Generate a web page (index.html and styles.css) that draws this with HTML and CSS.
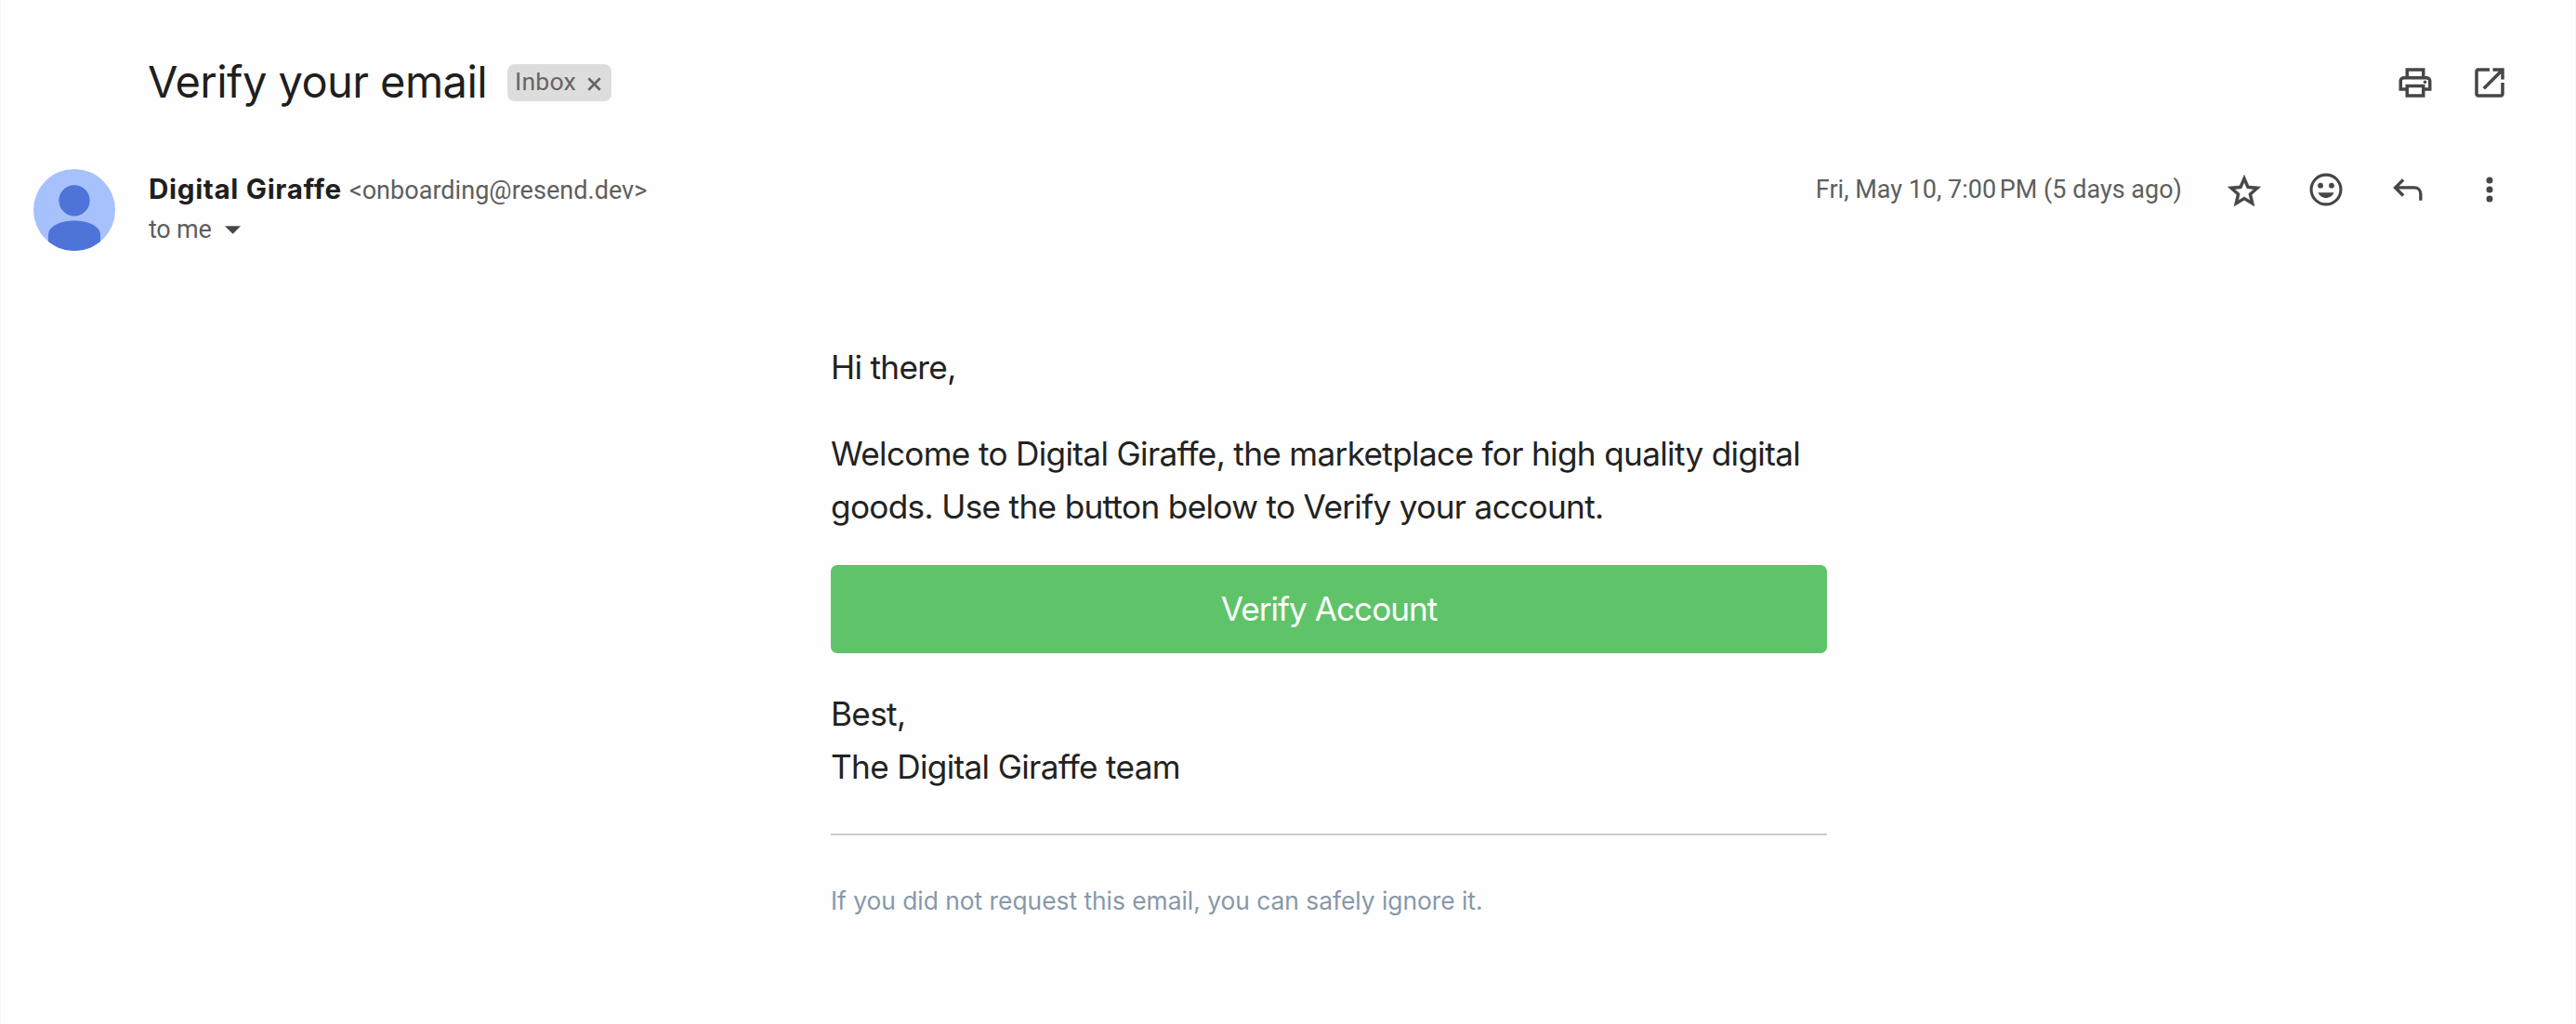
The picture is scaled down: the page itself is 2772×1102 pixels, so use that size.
FILE: index.html
```
<!DOCTYPE html>
<html lang="en">
<head>
<meta charset="utf-8">
<title>Verify your email</title>
<link rel="stylesheet" href="styles.css">
</head>
<body>
<main class="thread">
  <header class="subject-row">
    <h1 class="subject">Verify your email</h1>
    <span class="label">Inbox
      <svg class="label-close" viewBox="0 0 14 14"><path d="M1.2 1.2 12.8 12.8M12.8 1.2 1.2 12.8"/></svg>
    </span>
    <div class="thread-actions">
      <svg class="icon" viewBox="0 0 24 24"><path d="M19 8h-1V3H6v5H5c-1.66 0-3 1.34-3 3v6h4v4h12v-4h4v-6c0-1.66-1.34-3-3-3zM8 5h8v3H8V5zm8 12v2H8v-4h8v2zm2-2v-2H6v2H4v-4c0-.55.45-1 1-1h14c.55 0 1 .45 1 1v4h-2z"/><circle cx="18" cy="11.5" r="1"/></svg>
      <svg class="icon" viewBox="0 0 24 24"><path d="M19 19H5V5h7V3H5c-1.11 0-2 .9-2 2v14c0 1.1.89 2 2 2h14c1.1 0 2-.9 2-2v-7h-2v7zM14 3v2h3.59l-9.83 9.83 1.41 1.41L19 6.41V10h2V3h-7z"/></svg>
    </div>
  </header>

  <section class="message-head">
    <svg class="avatar" viewBox="0 0 88 88">
      <defs><clipPath id="disc"><circle cx="44" cy="44" r="44"/></clipPath></defs>
      <g clip-path="url(#disc)">
        <rect width="88" height="88" fill="#a6c1fb"/>
        <circle cx="44" cy="33.8" r="16.6" fill="#4e73d9"/>
        <path d="M16 88V71C16 61 30 55.6 44 55.6S72 61 72 71V88Z" fill="#4e73d9"/>
      </g>
    </svg>
    <div class="sender">
      <div class="sender-line"><span class="name">Digital Giraffe</span><span class="address">&lt;onboarding@resend.dev&gt;</span></div>
      <div class="recipient">to me <svg class="caret" viewBox="0 0 18 9"><path d="M0 0h18L9 9z"/></svg></div>
    </div>
    <div class="message-meta">
      <span class="date">Fri, May 10, 7:00<span class="thin"> </span>PM (5 days ago)</span>
      <svg class="icon star" viewBox="0 0 24 24"><path d="M22 9.24l-7.19-.62L12 2 9.19 8.63 2 9.24l5.46 4.73L5.82 21 12 17.27 18.18 21l-1.63-7.03L22 9.24zM12 15.4l-3.76 2.27 1-4.28-3.32-2.88 4.38-.38L12 6.1l1.71 4.04 4.38.38-3.32 2.88 1 4.28L12 15.4z"/></svg>
      <svg class="icon" viewBox="0 0 24 24"><path d="M12 2a10 10 0 1 0 0 20 10 10 0 0 0 0-20zm0 18.2a8.2 8.2 0 1 1 0-16.4 8.2 8.2 0 0 1 0 16.4z"/><circle cx="8.6" cy="9.5" r="1.65"/><circle cx="15.4" cy="9.5" r="1.65"/><path d="M7.2 13.9h9.6c-.7 2-2.6 3.3-4.8 3.3s-4.1-1.3-4.8-3.3z"/></svg>
      <svg class="icon reply" viewBox="0 0 24 24"><path d="M9.2 6 4.3 10.8l4.9 4.9M4.3 10.8H16c2.300 0 3.900 1.600 3.900 3.900v4"/></svg>
      <svg class="icon" viewBox="0 0 24 24"><circle cx="12" cy="6.3" r="2"/><circle cx="12" cy="12" r="2"/><circle cx="12" cy="17.7" r="2"/></svg>
    </div>
  </section>

  <article class="mail">
    <p class="text">Hi there,</p>
    <p class="text intro">Welcome to Digital Giraffe, the marketplace for high quality digital goods. Use the button below to Verify your account.</p>
    <a class="button">Verify Account</a>
    <p class="text">Best,<br>The Digital Giraffe team</p>
    <hr class="rule">
    <p class="footnote">If you did not request this email, you can safely ignore it.</p>
  </article>
</main>
</body>
</html>
```
FILE: styles.css
```
* {
  box-sizing: border-box;
}

body {
  margin: 0;
  background: #fff;
}

.thread {
  min-height: 1102px;
  padding: 58px 71px 0 35px;
  border-left: 1px solid #f6f8fc;
  border-right: 1px solid #f6f8fc;
  background: #fefefe;
  font-family: Roboto, "Liberation Sans", sans-serif;
  font-size: 27px;
  color: #5e5e5e;
}

.subject-row {
  display: flex;
  align-items: center;
  height: 62px;
  padding-left: 123px;
}

.subject {
  margin: 0 0 2px;
  font: 400 47px/60px Inter, sans-serif;
  letter-spacing: -0.55px;
  color: #1f1f1f;
}

.label {
  display: flex;
  align-items: center;
  gap: 12px;
  width: 112px;
  height: 40px;
  margin-left: 22px;
  padding: 0 10px 3px 8px;
  border-radius: 8px;
  background: #ddd;
  font-size: 26.6px;
  line-height: 36px;
  letter-spacing: 0.2px;
  color: #666;
}

.label-close {
  width: 15px;
  height: 15px;
  flex: none;
  margin-top: 6px;
  fill: none;
  stroke: #666;
  stroke-width: 2.5;
}

.thread-actions {
  display: flex;
  gap: 38px;
  margin-left: auto;
}

.icon {
  display: block;
  flex: none;
  width: 42px;
  height: 42px;
  fill: #444746;
}

.message-head {
  display: flex;
  align-items: flex-start;
  margin-top: 61px;
}

.avatar {
  width: 88px;
  height: 88px;
  margin: 1px 36px 0 0;
}

.sender-line {
  display: flex;
  align-items: baseline;
  gap: 8px;
  height: 44px;
  line-height: 44px;
}

.name {
  font: 700 29.6px/44px Inter, sans-serif;
  letter-spacing: 0.68px;
  color: #1f1f1f;
}

.address {
  letter-spacing: 0.04px;
}

.recipient {
  display: flex;
  align-items: center;
  gap: 14px;
  margin-top: 4px;
  line-height: 36px;
  letter-spacing: -0.2px;
}

.caret {
  width: 17px;
  height: 9px;
  fill: #444746;
}

.message-meta {
  display: flex;
  align-items: center;
  gap: 46px;
  height: 44px;
  margin: 1px 0 0 auto;
}

.date {
  letter-spacing: 0;
}

.thin {
  word-spacing: -3px;
}

.star {
  margin-top: 4px;
  stroke: #444746;
  stroke-width: 0.4;
}

.reply {
  fill: none;
  stroke: #444746;
  stroke-width: 1.9;
}

.mail {
  width: 1072px;
  margin: 96.7px 0 0 858px;
  font-family: Inter, sans-serif;
  color: #222;
}

.text {
  margin: 0 0 35.8px;
  font-size: 35.2px;
  line-height: 57.2px;
  letter-spacing: -0.68px;
}

.intro {
  margin-bottom: 34px;
}

.button {
  display: block;
  height: 95px;
  margin: 0 0 36.7px;
  border-radius: 7px;
  background: #5fc469;
  color: #fff;
  font-size: 35.2px;
  line-height: 95px;
  letter-spacing: -1px;
  text-align: center;
}

.rule {
  height: 2px;
  margin: 43px 0 43.7px;
  border: 0;
  background: #ccc;
}

.footnote {
  margin: 0;
  font-size: 26.4px;
  line-height: 52.8px;
  letter-spacing: -0.03px;
  color: #8898aa;
}
```
